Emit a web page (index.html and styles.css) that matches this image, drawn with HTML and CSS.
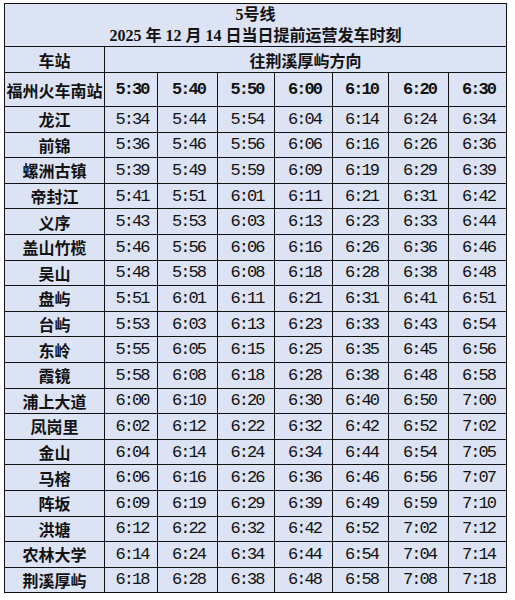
FILE: index.html
```html
<!DOCTYPE html>
<html lang="zh-CN">
<head>
<meta charset="utf-8">
<title>5号线 时刻表</title>
<link rel="stylesheet" href="styles.css">
</head>
<body>
<table class="timetable">
  <colgroup>
    <col class="c-station">
    <col class="c1"><col class="c2"><col class="c3"><col class="c4"><col class="c5"><col class="c6"><col class="c7">
  </colgroup>
  <tr class="r-title">
    <td colspan="8" class="title">5号线<br>2025 年 12 月 14 日当日提前运营发车时刻</td>
  </tr>
  <tr class="r-head">
    <td class="name">车站</td>
    <td colspan="7" class="name">往荆溪厚屿方向</td>
  </tr>
  <tr class="r-first">
    <td class="name">福州火车南站</td>
    <td class="bt">5:30</td><td class="bt">5:40</td><td class="bt">5:50</td><td class="bt">6:00</td><td class="bt">6:10</td><td class="bt">6:20</td><td class="bt">6:30</td>
  </tr>
  <tr class="r"><td class="name">龙江</td><td>5:34</td><td>5:44</td><td>5:54</td><td>6:04</td><td>6:14</td><td>6:24</td><td>6:34</td></tr>
  <tr class="r"><td class="name">前锦</td><td>5:36</td><td>5:46</td><td>5:56</td><td>6:06</td><td>6:16</td><td>6:26</td><td>6:36</td></tr>
  <tr class="r"><td class="name">螺洲古镇</td><td>5:39</td><td>5:49</td><td>5:59</td><td>6:09</td><td>6:19</td><td>6:29</td><td>6:39</td></tr>
  <tr class="r"><td class="name">帝封江</td><td>5:41</td><td>5:51</td><td>6:01</td><td>6:11</td><td>6:21</td><td>6:31</td><td>6:42</td></tr>
  <tr class="r"><td class="name">义序</td><td>5:43</td><td>5:53</td><td>6:03</td><td>6:13</td><td>6:23</td><td>6:33</td><td>6:44</td></tr>
  <tr class="r"><td class="name">盖山竹榄</td><td>5:46</td><td>5:56</td><td>6:06</td><td>6:16</td><td>6:26</td><td>6:36</td><td>6:46</td></tr>
  <tr class="r"><td class="name">吴山</td><td>5:48</td><td>5:58</td><td>6:08</td><td>6:18</td><td>6:28</td><td>6:38</td><td>6:48</td></tr>
  <tr class="r"><td class="name">盘屿</td><td>5:51</td><td>6:01</td><td>6:11</td><td>6:21</td><td>6:31</td><td>6:41</td><td>6:51</td></tr>
  <tr class="r"><td class="name">台屿</td><td>5:53</td><td>6:03</td><td>6:13</td><td>6:23</td><td>6:33</td><td>6:43</td><td>6:54</td></tr>
  <tr class="r"><td class="name">东岭</td><td>5:55</td><td>6:05</td><td>6:15</td><td>6:25</td><td>6:35</td><td>6:45</td><td>6:56</td></tr>
  <tr class="r"><td class="name">霞镜</td><td>5:58</td><td>6:08</td><td>6:18</td><td>6:28</td><td>6:38</td><td>6:48</td><td>6:58</td></tr>
  <tr class="r"><td class="name">浦上大道</td><td>6:00</td><td>6:10</td><td>6:20</td><td>6:30</td><td>6:40</td><td>6:50</td><td>7:00</td></tr>
  <tr class="r"><td class="name">凤岗里</td><td>6:02</td><td>6:12</td><td>6:22</td><td>6:32</td><td>6:42</td><td>6:52</td><td>7:02</td></tr>
  <tr class="r"><td class="name">金山</td><td>6:04</td><td>6:14</td><td>6:24</td><td>6:34</td><td>6:44</td><td>6:54</td><td>7:05</td></tr>
  <tr class="r"><td class="name">马榕</td><td>6:06</td><td>6:16</td><td>6:26</td><td>6:36</td><td>6:46</td><td>6:56</td><td>7:07</td></tr>
  <tr class="r"><td class="name">阵坂</td><td>6:09</td><td>6:19</td><td>6:29</td><td>6:39</td><td>6:49</td><td>6:59</td><td>7:10</td></tr>
  <tr class="r"><td class="name">洪塘</td><td>6:12</td><td>6:22</td><td>6:32</td><td>6:42</td><td>6:52</td><td>7:02</td><td>7:12</td></tr>
  <tr class="r"><td class="name">农林大学</td><td>6:14</td><td>6:24</td><td>6:34</td><td>6:44</td><td>6:54</td><td>7:04</td><td>7:14</td></tr>
  <tr class="r"><td class="name">荆溪厚屿</td><td>6:18</td><td>6:28</td><td>6:38</td><td>6:48</td><td>6:58</td><td>7:08</td><td>7:18</td></tr>
</table>
</body>
</html>
```
FILE: styles.css
```css
html, body {
  margin: 0;
  background: #ffffff;
}
body {
  padding: 3px 0 0 4px;
}
.timetable {
  border-collapse: collapse;
  table-layout: fixed;
  width: 503px;
  background: #dce3f4;
  color: #111;
}
.timetable td {
  border: 1px solid #111;
  padding: 0 0 0 2px;
  text-align: center;
  vertical-align: middle;
  font-family: "Liberation Mono", monospace;
  font-size: 17px;
  letter-spacing: -2px;
  line-height: 1;
  overflow: hidden;
  white-space: nowrap;
}
.c-station { width: 100px; }
.c1 { width: 53px; }
.c2 { width: 60px; }
.c3 { width: 57px; }
.c4 { width: 58px; }
.c5 { width: 56px; }
.c6 { width: 60px; }
.c7 { width: 58px; }

.r-title { height: 42px; }
.r-head { height: 26px; }
.r-first { height: 34px; }
.r { height: 25.6px; }

.timetable td.title {
  font-family: "Liberation Serif", "Noto Sans CJK SC", serif;
  font-weight: 700;
  font-size: 16px;
  letter-spacing: 0;
  line-height: 21px;
  padding: 0;
}
.timetable td.name {
  font-family: "Noto Sans CJK SC", sans-serif;
  font-weight: 700;
  font-size: 16px;
  letter-spacing: 0;
  padding: 0;
}
.timetable td.bt {
  font-weight: 700;
}
```
